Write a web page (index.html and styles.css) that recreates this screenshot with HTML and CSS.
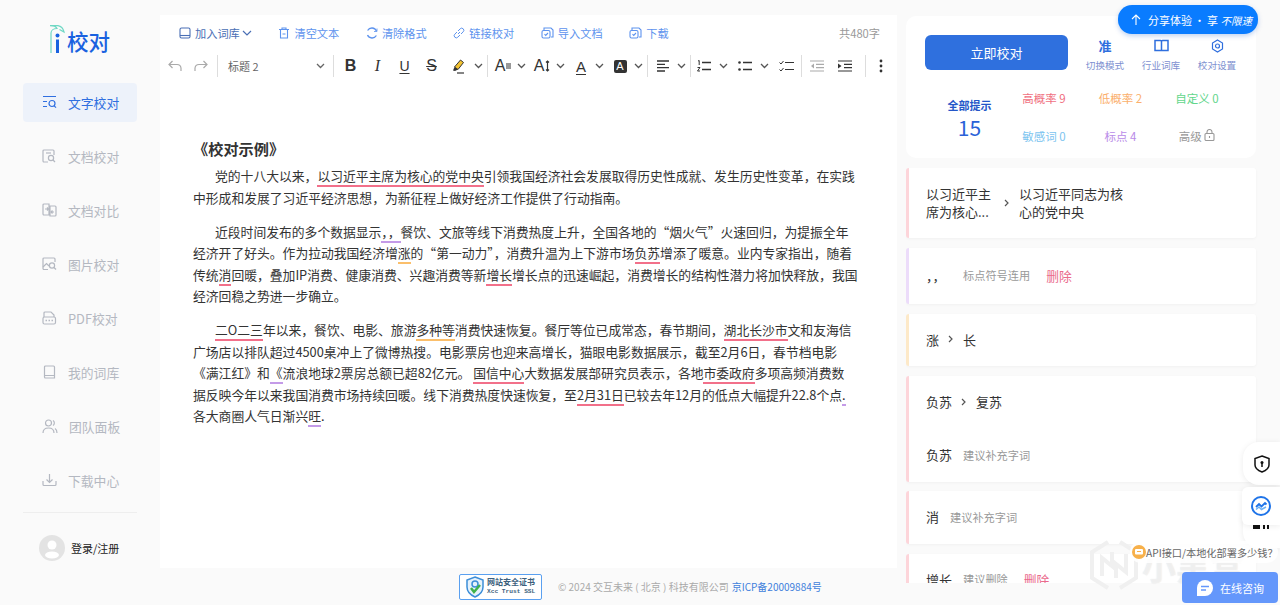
FILE: index.html
```html
<!DOCTYPE html>
<html>
<head>
  <meta charset="utf-8">
  <link rel="stylesheet" href="styles.css">
</head>
<body>
  <div class="page">
    <aside class="sidebar">
      <div class="logo">
        <svg class="logo-mark" width="17" height="29" viewBox="0 0 17 29" fill="none">
          <path d="M1 28V8C1 5 4 3.500 7 3.500C6 1.500 4 .7 0 .7H8C11 1.200 13 3 14 7L9.500 4.500" stroke="#6fd8c4" stroke-width="1.2"/>
          <circle cx="7.500" cy="10.500" r="2" fill="#1a62e0"/>
          <path d="M7.500 14.500V28" stroke="#1a62e0" stroke-width="3"/>
        </svg>
        <span>校对</span>
      </div>
      <nav class="nav">
        <div class="nav-item active">
          <svg width="15" height="14" viewBox="0 0 15 14" fill="none" stroke="currentColor" stroke-width="1.2"><path d="M1 1.5h13M1 6.5h4M1 11.5h4"/><circle cx="10" cy="8.5" r="3"/><path d="M12.2 10.8l1.8 1.8"/></svg>
          <span>文字校对</span>
        </div>
        <div class="nav-item">
          <svg width="15" height="14" viewBox="0 0 15 14" fill="none" stroke="currentColor" stroke-width="1.2"><path d="M6 13H2a1 1 0 0 1-1-1V2a1 1 0 0 1 1-1h9a1 1 0 0 1 1 1v4"/><path d="M4 4h5"/><circle cx="9" cy="9" r="2.6"/><path d="M11 11l2 2"/></svg>
          <span>文档校对</span>
        </div>
        <div class="nav-item">
          <svg width="15" height="14" viewBox="0 0 15 14" fill="none" stroke="currentColor" stroke-width="1.2"><path d="M7 12H2a1 1 0 0 1-1-1V2a1 1 0 0 1 1-1h5zM8 3h5a1 1 0 0 1 1 1v8a1 1 0 0 1-1 1H8z"/><path d="M3 6h3M5 4.5L6.5 6 5 7.5M12 9H9.500M10.500 7.500L9 9l1.500 1.500"/></svg>
          <span>文档对比</span>
        </div>
        <div class="nav-item">
          <svg width="15" height="14" viewBox="0 0 15 14" fill="none" stroke="currentColor" stroke-width="1.2"><path d="M6 12.500H2a1 1 0 0 1-1-1V2a1 1 0 0 1 1-1h10a1 1 0 0 1 1 1v3"/><path d="M1 10l3.500-3.500L7 9"/><circle cx="10" cy="8.500" r="2.600"/><path d="M12 10.500l2 2"/></svg>
          <span>图片校对</span>
        </div>
        <div class="nav-item">
          <svg width="15" height="14" viewBox="0 0 15 14" fill="none" stroke="currentColor" stroke-width="1.2"><path d="M2 6V2a1 1 0 0 1 1-1h6l3 3v2"/><rect x="1" y="6" width="12.500" height="7" rx="1.500"/><path d="M3.500 9.500h1.500M6.500 9.500h1.500M9.500 9.500h1.500" stroke-width="1.600"/></svg>
          <span>PDF校对</span>
        </div>
        <div class="nav-item">
          <svg width="15" height="14" viewBox="0 0 15 14" fill="none" stroke="currentColor" stroke-width="1.2"><path d="M2.500 12V2a1 1 0 0 1 1-1h8a1 1 0 0 1 1 1v11H3.500a1 1 0 0 1-1-1zM2.500 10.500h10"/></svg>
          <span>我的词库</span>
        </div>
        <div class="nav-item">
          <svg width="16" height="15" viewBox="0 0 16 15" fill="none" stroke="currentColor" stroke-width="1.2"><circle cx="6.500" cy="4" r="3"/><path d="M1 14c0-3.500 2.500-5 5.500-5s5.500 1.500 5.500 5M11 1.500a3 3 0 0 1 0 5M13 9.500c1.300.8 2 2.300 2 4.500"/></svg>
          <span>团队面板</span>
        </div>
        <div class="nav-item">
          <svg width="15" height="14" viewBox="0 0 15 14" fill="none" stroke="currentColor" stroke-width="1.2"><path d="M7.500 1v8M4.500 6.500l3 3 3-3M1 8v3.500a1 1 0 0 0 1 1h11a1 1 0 0 0 1-1V8"/></svg>
          <span>下载中心</span>
        </div>
      </nav>
      <div class="login">
        <div class="avatar">
          <svg width="26" height="26" viewBox="0 0 26 26" fill="#fff"><circle cx="13" cy="10" r="4.500"/><ellipse cx="13" cy="20" rx="7" ry="3.500"/></svg>
        </div>
        <span>登录/注册</span>
      </div>
    </aside>

    <main class="center">
      <section class="editor">
        <div class="actions">
          <div class="action dark">
            <svg width="12" height="12" viewBox="0 0 12 12" fill="none" stroke="currentColor" stroke-width="1.100"><rect x="1" y="1" width="10" height="10" rx="1.500"/><path d="M1 8.500h10"/></svg>
            <span>加入词库</span>
            <svg width="10" height="6" viewBox="0 0 10 6" fill="none" stroke="currentColor" stroke-width="1.200"><path d="M1 1l4 4 4-4"/></svg>
          </div>
          <div class="action">
            <svg width="12" height="12" viewBox="0 0 12 12" fill="none" stroke="currentColor" stroke-width="1.100"><path d="M1 2.500h10M4 2.500V1h4v1.500M2.500 2.500V11h7V2.500M4.500 7h3"/></svg>
            <span>清空文本</span>
          </div>
          <div class="action">
            <svg width="12" height="12" viewBox="0 0 12 12" fill="none" stroke="currentColor" stroke-width="1.300"><path d="M10.500 4A5 5 0 0 0 1.600 3.500M1.500 8A5 5 0 0 0 10.400 8.500"/><path d="M11 1.500V4.500H8" stroke-width="0.800"/></svg>
            <span>清除格式</span>
          </div>
          <div class="action">
            <svg width="12" height="12" viewBox="0 0 12 12" fill="none" stroke="currentColor" stroke-width="1"><path d="M5 7l2-2M4 5L1.800 7.200a2 2 0 0 0 3 3L7 8M8 7l2.200-2.200a2 2 0 0 0-3-3L5 4"/></svg>
            <span>链接校对</span>
          </div>
          <div class="action up">
            <svg width="13" height="12" viewBox="0 0 13 12" fill="none" stroke="currentColor" stroke-width="1.100"><path d="M3 3V1h7l2 2v7h-2"/><rect x="1" y="3.500" width="8" height="7.500" rx="1.500"/><path d="M3.500 7.200l1.200 1.200L7 6"/></svg>
            <span>导入文档</span>
          </div>
          <div class="action up">
            <svg width="13" height="12" viewBox="0 0 13 12" fill="none" stroke="currentColor" stroke-width="1.100"><path d="M3 3V1h7l2 2v7h-2"/><rect x="1" y="3.500" width="8" height="7.500" rx="1.500"/><path d="M3.500 7.200l1.200 1.200L7 6"/></svg>
            <span>下载</span>
          </div>
          <div class="word-count">共480字</div>
        </div>

        <div class="toolbar">
          <div class="group">
            <div class="ic muted"><svg width="14" height="12" viewBox="0 0 14 12" fill="none" stroke="currentColor" stroke-width="1.200"><path d="M4.500 1L1 4.500 4.500 8M1 4.500h8a4 4 0 0 1 4 3.500v3"/></svg></div>
            <div class="ic muted"><svg width="14" height="12" viewBox="0 0 14 12" fill="none" stroke="currentColor" stroke-width="1.200"><path d="M9.500 1L13 4.500 9.500 8M13 4.500H5a4 4 0 0 0-4 3.500v3"/></svg></div>
          </div>
          <div class="sep"></div>
          <div class="select">
            <span>标题 2</span>
            <svg class="chev" width="9" height="6" viewBox="0 0 9 6" fill="none" stroke="currentColor" stroke-width="1.300"><path d="M1 1l3.500 3.500L8 1"/></svg>
          </div>
          <div class="sep"></div>
          <div class="group marks">
            <div class="ic letter bold">B</div>
            <div class="ic letter italic">I</div>
            <div class="ic letter under">U</div>
            <div class="ic letter strike">S</div>
            <div class="ic"><svg width="15" height="15" viewBox="0 0 15 15"><path d="M9.500 1l3 2.500L7 10.500 3.500 8z" fill="#f2c230" stroke="#333" stroke-width="1"/><path d="M3.500 8L2 11.500l2 .5 3-1.500" fill="#333"/><path d="M6 14h7" stroke="#333" stroke-width="1.200"/></svg></div>
            <div class="ch"><svg width="9" height="6" viewBox="0 0 9 6" fill="none" stroke="currentColor" stroke-width="1.300"><path d="M1 1l3.500 3.500L8 1"/></svg></div>
          </div>
          <div class="sep"></div>
          <div class="group pairs">
            <div class="pair">
              <div class="ic letter">A<svg class="tail" width="5" height="6" viewBox="0 0 5 6" stroke="currentColor" stroke-width="1"><path d="M0 1h5M0 3h5M0 5h5"/></svg></div>
              <div class="ch"><svg width="9" height="6" viewBox="0 0 9 6" fill="none" stroke="currentColor" stroke-width="1.300"><path d="M1 1l3.500 3.500L8 1"/></svg></div>
            </div>
            <div class="pair">
              <div class="ic letter">A<svg class="tail" width="5" height="12" viewBox="0 0 5 12" fill="none" stroke="currentColor" stroke-width="1.200"><path d="M2.500 1v10M1 2.500L2.500 1 4 2.500M1 9.500L2.500 11 4 9.500"/></svg></div>
              <div class="ch"><svg width="9" height="6" viewBox="0 0 9 6" fill="none" stroke="currentColor" stroke-width="1.300"><path d="M1 1l3.500 3.500L8 1"/></svg></div>
            </div>
            <div class="pair">
              <div class="ic letter under-bar">A</div>
              <div class="ch"><svg width="9" height="6" viewBox="0 0 9 6" fill="none" stroke="currentColor" stroke-width="1.300"><path d="M1 1l3.500 3.500L8 1"/></svg></div>
            </div>
            <div class="pair">
              <div class="ic"><span class="box-a">A</span></div>
              <div class="ch"><svg width="9" height="6" viewBox="0 0 9 6" fill="none" stroke="currentColor" stroke-width="1.300"><path d="M1 1l3.500 3.500L8 1"/></svg></div>
            </div>
          </div>
          <div class="sep"></div>
          <div class="pair">
            <div class="ic"><svg width="14" height="12" viewBox="0 0 14 12" stroke="currentColor" stroke-width="1.300"><path d="M1 1h12M1 4.300h8M1 7.600h12M1 11h8"/></svg></div>
            <div class="ch"><svg width="9" height="6" viewBox="0 0 9 6" fill="none" stroke="currentColor" stroke-width="1.300"><path d="M1 1l3.500 3.500L8 1"/></svg></div>
          </div>
          <div class="sep"></div>
          <div class="group lists">
            <div class="pair wide">
              <div class="ic"><svg width="14" height="12" viewBox="0 0 14 12" stroke="currentColor" stroke-width="1.300"><path d="M5 2.500h9M5 9.500h9"/><path d="M1 1l1.200-.5V5M0.500 7.500h2.500L0.500 11H3" fill="none" stroke-width="1"/></svg></div>
              <div class="ch"><svg width="9" height="6" viewBox="0 0 9 6" fill="none" stroke="currentColor" stroke-width="1.300"><path d="M1 1l3.500 3.500L8 1"/></svg></div>
            </div>
            <div class="pair wide">
              <div class="ic"><svg width="14" height="12" viewBox="0 0 14 12" stroke="currentColor" stroke-width="1.300"><path d="M5 2.500h9M5 9.500h9"/><circle cx="1.500" cy="2.500" r="1.300" fill="currentColor" stroke="none"/><circle cx="1.500" cy="9.500" r="1.300" fill="currentColor" stroke="none"/></svg></div>
              <div class="ch"><svg width="9" height="6" viewBox="0 0 9 6" fill="none" stroke="currentColor" stroke-width="1.300"><path d="M1 1l3.500 3.500L8 1"/></svg></div>
            </div>
            <div class="ic"><svg width="15" height="12" viewBox="0 0 15 12" fill="none" stroke="currentColor" stroke-width="1.200"><path d="M6 2.500h9M6 9.500h9"/><path d="M.5 2.500l1.500 1.500L4.500 1M.5 9.500L2 11l2.500-3" stroke-width="1"/></svg></div>
          </div>
          <div class="sep"></div>
          <div class="group indents">
            <div class="ic muted"><svg width="14" height="12" viewBox="0 0 14 12" stroke="currentColor" stroke-width="1.200"><path d="M0 1h14M6 4.300h8M6 7.600h8M0 11h14"/><path d="M4 3.500L1 6l3 2.500z" fill="currentColor" stroke="none"/></svg></div>
            <div class="ic"><svg width="14" height="12" viewBox="0 0 14 12" stroke="currentColor" stroke-width="1.200"><path d="M0 1h14M6 4.300h8M6 7.600h8M0 11h14"/><path d="M0 3.500L3.500 6 0 8.500z" fill="currentColor" stroke="none"/></svg></div>
          </div>
          <div class="sep"></div>
          <div class="ic"><svg width="4" height="14" viewBox="0 0 4 14" fill="currentColor"><circle cx="2" cy="2" r="1.400"/><circle cx="2" cy="7" r="1.400"/><circle cx="2" cy="12" r="1.400"/></svg></div>
        </div>

        <article class="doc">
          <h2>《校对示例》</h2>
          <p class="indent">党的十八大以来，<span class="red">以习近平主席为核心的党中央</span>引领我国经济社会发展取得历史性成就、发生历史性变革，在实践<br>中形成和发展了习近平经济思想，为新征程上做好经济工作提供了行动指南。</p>
          <p class="indent">近段时间发布的多个数据显示<span class="violet">，，</span>餐饮、文旅等线下消费热度上升，全国各地的“烟火气”火速回归，为提振全年<br>经济开了好头。作为拉动我国经济增<span class="amber">涨</span>的“第一动力”，消费升温为上下游市场<span class="red">负苏</span>增添了暖意。业内专家指出，随着<br>传统<span class="red">消</span>回暖，叠加IP消费、健康消费、兴趣消费等新<span class="red">增长</span>增长点的迅速崛起，消费增长的结构性潜力将加快释放，我国<br>经济回稳之势进一步确立。</p>
          <p class="indent"><span class="red">二O二三</span>年以来，餐饮、电影、旅游<span class="amber">多种等</span>消费快速恢复。餐厅等位已成常态，春节期间，<span class="red">湖北长沙市</span>文和友海信<br>广场店以排队超过4500桌冲上了微博热搜。电影票房也迎来高增长，猫眼电影数据展示，截至2月6日，春节档电影<br>《满江红》和<span class="violet">《</span>流浪地球2票房总额已超82亿元。 <span class="red">国信中心</span>大数据发展部研究员表示，各地<span class="red">市委政府</span>多项高频消费数<br>据反映今年以来我国消费市场持续回暖。线下消费热度快速恢复，至<span class="red">2月31日</span>已较去年12月的低点大幅提升22.8个点<span class="violet">.</span><br>各大商圈人气日渐兴<span class="violet">旺</span>.</p>
        </article>
      </section>
      <footer class="footer">
        <div class="badge">
          <svg width="18" height="22" viewBox="0 0 18 22"><path d="M9 1l8 3v7c0 5-3.500 8-8 10-4.500-2-8-5-8-10V4z" fill="#e6f2fc" stroke="#3d8ed8" stroke-width="1.500"/><circle cx="9" cy="8" r="3" fill="none" stroke="#3d8ed8" stroke-width="1.500"/><path d="M5 12l3 4 6-7" fill="none" stroke="#3fb24b" stroke-width="2.500"/></svg>
          <div class="badge-text">
            <b>网站安全证书</b>
            <i>Xcc Trust SSL</i>
          </div>
        </div>
        <span class="copy">© 2024 交互未来 ( 北京 ) 科技有限公司</span>
        <a class="icp">京ICP备20009884号</a>
      </footer>
    </main>

    <section class="side">
      <div class="panel">
        <div class="panel-top">
          <button class="check-btn">立即校对</button>
          <div class="tool">
            <b class="tool-icon">准</b>
            <span>切换模式</span>
          </div>
          <div class="tool">
            <svg class="tool-icon" width="15" height="13" viewBox="0 0 15 13" fill="none" stroke="currentColor" stroke-width="1.500"><path d="M1 1h5.500a1 1 0 0 1 1 1 1 1 0 0 1 1-1H14v10H1zM7.500 2v9"/></svg>
            <span>行业词库</span>
          </div>
          <div class="tool">
            <svg class="tool-icon" width="13" height="14" viewBox="0 0 13 14" fill="none" stroke="currentColor" stroke-width="1.200"><path d="M6.500 1l5 3v6l-5 3-5-3V4z"/><circle cx="6.500" cy="7" r="2"/></svg>
            <span>校对设置</span>
          </div>
        </div>
        <div class="stats">
          <div class="total">
            <b>全部提示</b>
            <span>15</span>
          </div>
          <div class="stat-grid">
            <span class="c-red">高概率 9</span>
            <span class="c-orange">低概率 2</span>
            <span class="c-green">自定义 0</span>
            <span class="c-sky">敏感词 0</span>
            <span class="c-violet">标点 4</span>
            <span class="c-gray">高级
              <svg width="11" height="12" viewBox="0 0 11 12" fill="none" stroke="currentColor" stroke-width="1.100"><rect x="1" y="4.500" width="9" height="7" rx="1"/><path d="M3 4.500V3a2.500 2.500 0 0 1 5 0v1.500M5.500 7v2"/></svg>
            </span>
          </div>
        </div>
      </div>

      <div class="results">
        <div class="list">
          <div class="card pink first">
            <div class="from">以习近平主席为核心...</div>
            <svg class="arrow" width="6" height="8" viewBox="0 0 6 8" fill="none" stroke="currentColor" stroke-width="1.200"><path d="M1 1l3 3-3 3"/></svg>
            <div class="to">以习近平同志为核心的党中央</div>
          </div>
          <div class="card violet-b tall">
            <span class="word">，，</span>
            <span class="hint">标点符号连用</span>
            <span class="del">删除</span>
          </div>
          <div class="card amber-b">
            <span>涨</span>
            <svg class="arrow" width="6" height="8" viewBox="0 0 6 8" fill="none" stroke="currentColor" stroke-width="1.200"><path d="M1 1l3 3-3 3"/></svg>
            <span>长</span>
          </div>
          <div class="card pink stack">
            <div class="row">
              <span>负苏</span>
              <svg class="arrow" width="6" height="8" viewBox="0 0 6 8" fill="none" stroke="currentColor" stroke-width="1.200"><path d="M1 1l3 3-3 3"/></svg>
              <span>复苏</span>
            </div>
            <div class="row">
              <span>负苏</span>
              <span class="hint">建议补充字词</span>
            </div>
          </div>
          <div class="card pink short">
            <span>消</span>
            <span class="hint">建议补充字词</span>
          </div>
          <div class="card pink">
            <span>增长</span>
            <span class="hint">建议删除</span>
            <span class="del">删除</span>
          </div>
        </div>
        <div class="thumb"></div>
      </div>
    </section>
  </div>

  <div class="share">
    <svg width="10" height="11" viewBox="0 0 10 11" fill="none" stroke="#fff" stroke-width="1.100"><path d="M5 11V1M1 5l4-4 4 4"/></svg>
    <span>分享体验<span class="dot">·</span>享 <em>不限速</em></span>
  </div>

  <div class="float-tile back">
    <svg width="18" height="7" viewBox="0 0 18 7" fill="#111"><rect x="0" y="0" width="7" height="6"/><rect x="10" y="0" width="2" height="6"/><rect x="14" y="0" width="2" height="6"/></svg>
  </div>
  <div class="float-tile shield">
    <svg width="16" height="18" viewBox="0 0 16 18" fill="none" stroke="#111" stroke-width="1.500"><path d="M8 1l7 2.500V10c0 3.500-3 5.500-7 7-4-1.500-7-3.500-7-7V3.500z"/><circle cx="8" cy="7.500" r="1.500" fill="#111" stroke="none"/><path d="M8 8v4"/></svg>
  </div>
  <div class="float-tile brand">
    <svg width="20" height="20" viewBox="0 0 20 20" fill="none"><circle cx="10" cy="10" r="9" stroke="#1f74e8" stroke-width="2"/><path d="M5 11l3-3 2.500 2.500L14 7l1.500 1.500" stroke="#1f74e8" stroke-width="1.800"/><path d="M5 13.500l3-2.500 2.500 2.500L15 11" stroke="#6bb0f5" stroke-width="1.500"/></svg>
  </div>

  <div class="watermark">
    <svg width="52" height="54" viewBox="0 0 52 54" fill="none" stroke="#f0f0f0" stroke-width="4"><path d="M20 4L4 14v26l16 10M32 4l16 10v26L32 50M14 38V20l10 8V14M38 16v18l-10-8v14"/></svg>
    <span>小黑盒</span>
  </div>

  <div class="tip">
    <span class="tip-dot"><svg width="8" height="7" viewBox="0 0 8 7"><rect width="8" height="5.500" rx="1" fill="#fff"/><rect x="2" y="2" width="4" height="1" fill="#f7b04a"/></svg></span>
    <span>API接口/本地化部署多少钱？</span>
  </div>

  <div class="chat">
    <svg width="16" height="16" viewBox="0 0 16 16"><path d="M8 0a8 8 0 0 1 0 16H0V8a8 8 0 0 1 8-8z" fill="#fff"/><path d="M4 6.500h8M4 10h5" stroke="#6497fb" stroke-width="1.400"/></svg>
    <span>在线咨询</span>
  </div>
</body>
</html>
```

FILE: styles.css
```css
* {
  box-sizing: border-box;
}

html, body {
  margin: 0;
  height: 100%;
  overflow: hidden;
}

body {
  position: relative;
  font-family: "Noto Sans CJK SC", "Noto Sans", sans-serif;
  font-size: 13px;
  color: #333;
  background: #fafafa;
}

.page {
  display: flex;
  height: 605px;
}

/* sidebar */
.sidebar {
  width: 160px;
  flex: none;
  padding: 25px 23px 0;
}

.logo {
  display: flex;
  align-items: flex-end;
  height: 29px;
  margin-left: 27px;
  color: #1a62e0;
  font-size: 21.500px;
  font-weight: 500;
  line-height: 26px;
}

.logo-mark {
  flex: none;
}

.nav {
  margin-top: 29px;
  padding-bottom: 12px;
  border-bottom: 1px solid #eee;
}

.nav-item {
  display: flex;
  align-items: center;
  gap: 11px;
  height: 39px;
  margin-bottom: 15px;
  padding-left: 19px;
  padding-bottom: 1px;
  border-radius: 4px;
  color: #b4b8c1;
  font-size: 12.800px;
}

.nav-item:last-child {
  margin-bottom: 0;
}

.nav-item.active {
  color: #2f6fe0;
  background: #edf2fa;
}

.login {
  display: flex;
  align-items: center;
  gap: 6px;
  margin-top: 21px;
  padding-left: 16px;
  color: #222;
  font-size: 11px;
  line-height: 28px;
}

.avatar {
  width: 26px;
  height: 26px;
  border-radius: 50%;
  overflow: hidden;
  background: #e3e3e3;
}

.avatar svg {
  display: block;
}

/* editor */
.center {
  width: 737px;
  flex: none;
  display: flex;
  flex-direction: column;
  padding-top: 15px;
}

.editor {
  height: 553px;
  background: #fff;
}

.actions {
  display: flex;
  align-items: center;
  height: 36px;
  padding-left: 19px;
  color: #5d93ee;
  font-size: 11.200px;
}

.action {
  display: flex;
  align-items: center;
  gap: 4px;
  margin-right: 26.700px;
}

.action.up {
  margin-top: -1px;
}

.action.dark {
  color: #4a6fb5;
}

.action.dark svg:last-child {
  margin-left: -2px;
}

.word-count {
  margin-left: auto;
  margin-right: 17px;
  color: #999;
}

.toolbar {
  display: flex;
  align-items: center;
  height: 30px;
  padding-left: 2px;
  color: #333;
}

.group {
  display: flex;
  align-items: center;
}

.sep {
  width: 1px;
  height: 22px;
  margin: 0 3px;
  background: #ddd;
}

.ic {
  display: flex;
  align-items: center;
  justify-content: center;
  width: 24px;
  height: 24px;
  flex: none;
}

.ic.muted {
  color: #aaa;
}

.group:first-child .ic {
  width: 26px;
}

.marks .ic {
  width: 27px;
}

.ch {
  display: flex;
  align-items: center;
  justify-content: center;
  width: 12px;
  flex: none;
  color: #555;
}

.pair {
  display: flex;
  align-items: center;
}

.pairs {
  gap: 3px;
}

.lists {
  gap: 3px;
  margin-left: -2px;
}

.pair.wide .ch {
  width: 14px;
}

.indents {
  gap: 4px;
  padding-right: 5px;
}

.select {
  display: flex;
  align-items: center;
  justify-content: space-between;
  width: 109px;
  padding: 0 5px 0 7px;
  color: #666;
  font-size: 11px;
}

.letter {
  font-family: "Liberation Sans", sans-serif;
  font-size: 16px;
}

.bold {
  font-weight: 700;
}

.italic {
  font-family: "Liberation Serif", serif;
  font-style: italic;
}

.under {
  font-size: 14px;
  text-decoration: underline;
  text-underline-offset: 2px;
}

.strike {
  font-size: 16px;
  text-decoration: line-through;
}

.under-bar {
  font-size: 15px;
  text-decoration: underline;
  text-underline-offset: 2px;
}

.tail {
  margin-left: 1px;
}

.box-a {
  width: 13px;
  height: 13px;
  border-radius: 2px;
  background: #333;
  color: #fff;
  font-family: "Liberation Sans", sans-serif;
  font-size: 11px;
  line-height: 13px;
  text-align: center;
}

.doc {
  padding: 56px 0 0 33px;
  font-size: 12.8px;
  line-height: 21.5px;
  white-space: nowrap;
}

.doc h2 {
  margin: 0 0 6px;
  font-size: 15.200px;
  font-weight: 700;
  line-height: 22px;
}

.doc p {
  margin: 0 0 12.5px;
}

.indent {
  text-indent: 22px;
}

.red {
  border-bottom: 2px solid #f2708a;
}

.amber {
  border-bottom: 2px solid #fbbf6b;
}

.violet {
  border-bottom: 2px solid #c49be8;
}

.footer {
  display: flex;
  align-items: center;
  flex: 1;
  padding-left: 299px;
  font-size: 10px;
  color: #aaa;
  white-space: nowrap;
}

.badge {
  display: flex;
  align-items: center;
  gap: 3px;
  width: 83px;
  height: 26px;
  flex: none;
  margin-right: 16px;
  padding-left: 6px;
  border: 1px solid #5aa0f0;
  border-radius: 2px;
  background: #fff;
}

.badge-text {
  display: flex;
  flex-direction: column;
  line-height: 10px;
  color: #3c5f7d;
}

.badge-text b {
  font-size: 8px;
}

.badge-text i {
  font-family: "Liberation Mono", monospace;
  font-size: 6.200px;
  font-style: normal;
  font-weight: 700;
}

.icp {
  margin-left: 3px;
  color: #3f7fdc;
}

/* right column */
.side {
  width: 364px;
  flex: none;
  padding: 16px 0 0 9px;
}

.panel {
  width: 350px;
  height: 142px;
  padding-top: 19px;
  border-radius: 10px;
  background: #fff;
}

.panel-top {
  display: flex;
  height: 40px;
  padding-left: 19px;
}

.check-btn {
  width: 143px;
  height: 35px;
  margin-right: 9px;
  border: 0;
  border-radius: 6px;
  background: #2f70de;
  color: #fff;
  font-family: inherit;
  font-size: 13px;
}

.tool {
  display: flex;
  flex-direction: column;
  align-items: center;
  width: 56px;
  padding-top: 2px;
  color: #7d8fd0;
  font-size: 9.600px;
  line-height: 14px;
}

.tool-icon {
  height: 18px;
  margin-bottom: 3px;
  color: #2f6fde;
  font-size: 13px;
  line-height: 18px;
}

.stats {
  display: flex;
  margin-top: 4px;
}

.total {
  display: flex;
  flex-direction: column;
  align-items: center;
  justify-content: center;
  width: 81px;
  margin-left: 27px;
  margin-right: -8px;
  padding-top: 6px;
  padding-right: 8px;
  color: #2456c8;
}

.total b {
  font-size: 11px;
  font-weight: 700;
  line-height: 14px;
}

.total span {
  color: #2a62d8;
  font-size: 21px;
  line-height: 30px;
}

.stat-grid {
  display: grid;
  grid-template-columns: 76px 77px 76px;
  grid-auto-rows: 38px;
  align-items: center;
  justify-items: center;
  font-size: 11.500px;
}

.c-red { color: #f0707f; }
.c-orange { color: #fbb06d; }
.c-green { color: #62d68c; }
.c-sky { color: #7cc4ef; }
.c-violet { color: #b98be8; }
.c-gray { color: #999; }

.results {
  display: flex;
  gap: 8px;
  height: 415px;
  margin-top: 10px;
  overflow: hidden;
}

.list {
  width: 350px;
  flex: none;
}

.thumb {
  width: 6px;
  height: 125px;
  border-radius: 3px;
  background: #d0d0d2;
}

.card {
  display: flex;
  align-items: center;
  min-height: 52px;
  margin-bottom: 10px;
  padding-left: 17px;
  padding-bottom: 2px;
  border-left: 3px solid #fdd5da;
  border-radius: 3px;
  background: #fff;
  box-shadow: 0 1px 3px rgba(0,0,0,0.04);
  color: #333;
}

.card.pink { border-left-color: #fdd5da; }
.card.violet-b { border-left-color: #ecdcfa; }
.card.amber-b { border-left-color: #fde9c8; }

.card.first {
  height: 70px;
  padding-bottom: 0;
  line-height: 18px;
}

.card.tall {
  height: 56px;
}

.card.stack {
  display: block;
  margin-bottom: 9px;
  padding-bottom: 0;
}

.card.short {
  height: 53px;
}

.row {
  display: flex;
  align-items: center;
  height: 53px;
  padding-bottom: 2px;
}

.from {
  width: 65px;
}

.to {
  width: 105px;
}

.arrow {
  flex: none;
  margin: 0 9px;
  color: #555;
}

.first .arrow {
  margin: 0 9px 0 13px;
}

.hint {
  margin-left: 11px;
  color: #999;
  font-size: 11.200px;
}

.word {
  width: 26px;
}

.del {
  margin-left: 16px;
  color: #ea6a8c;
  font-size: 12.800px;
}

/* things floating over the page */
.share {
  position: absolute;
  left: 1118px;
  top: 5px;
  display: flex;
  align-items: center;
  gap: 7px;
  width: 140px;
  height: 29px;
  padding-left: 13px;
  border-radius: 14px;
  background: #0a7cff;
  box-shadow: 0 2px 5px rgba(0,80,200,0.25);
  color: #fff;
  font-size: 11px;
  white-space: nowrap;
}

.share .dot {
  margin: 0 2px;
}

.share em {
  font-size: 10.500px;
}

.watermark {
  position: absolute;
  left: 1088px;
  top: 538px;
  display: flex;
  align-items: center;
  gap: 2px;
  color: rgba(255,255,255,0.5);
  font-size: 34px;
  font-weight: 700;
  text-shadow: 0 0 1px rgba(150,150,150,0.3);
  white-space: nowrap;
  pointer-events: none;
}

.float-tile {
  position: absolute;
  display: flex;
  align-items: center;
  justify-content: center;
  background: #fff;
  box-shadow: 0 1px 6px rgba(0,0,0,0.08);
}

.float-tile.shield {
  left: 1243px;
  top: 442px;
  width: 37px;
  height: 43px;
  border-radius: 16px 0 0 16px;
}

.float-tile.back {
  left: 1243px;
  top: 505px;
  width: 37px;
  height: 43px;
  border-radius: 16px 0 0 16px;
}

.float-tile.brand {
  left: 1242px;
  top: 487px;
  width: 38px;
  height: 38px;
  border-radius: 6px 0 0 6px;
}

.tip {
  position: absolute;
  left: 1130px;
  top: 541px;
  display: flex;
  align-items: center;
  width: 148px;
  height: 22px;
  padding-left: 2px;
  border-radius: 11px;
  background: rgba(255,255,255,0.85);
  color: #666;
  font-size: 10.200px;
  white-space: nowrap;
}

.tip-dot {
  display: flex;
  align-items: center;
  justify-content: center;
  width: 14px;
  height: 14px;
  flex: none;
  border-radius: 50%;
  background: #f7b04a;
}

.chat {
  position: absolute;
  left: 1182px;
  top: 572px;
  display: flex;
  align-items: center;
  gap: 7px;
  width: 96px;
  height: 31px;
  padding-left: 15px;
  border-radius: 4px;
  background: #6497fb;
  color: #fff;
  font-size: 11px;
}
```
